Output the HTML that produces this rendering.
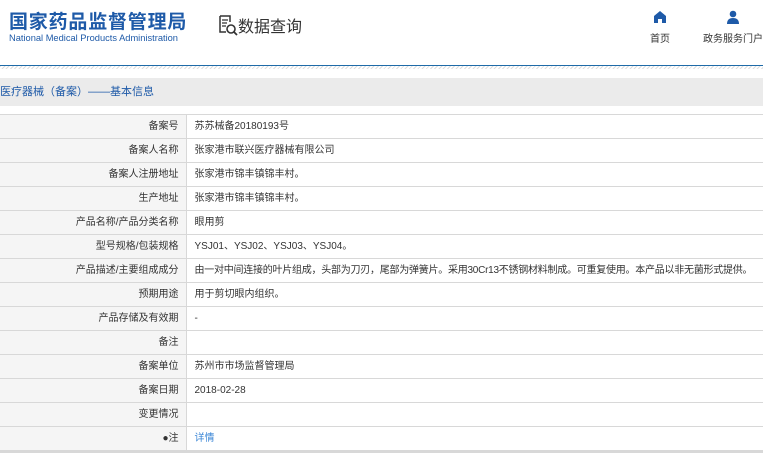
<!DOCTYPE html>
<html><head><meta charset="utf-8"><style>
body{margin:0;width:763px;height:456px;overflow:hidden;background:#fff;font-family:"Liberation Sans","Noto Sans CJK SC",sans-serif;color:#333}
.hd{position:relative;height:65px;border-bottom:1px solid #1f6ba8}
.logo1{position:absolute;left:9px;top:7px;font-size:19px;font-weight:bold;color:#1e5aa8;letter-spacing:0.8px}
.logo2{position:absolute;left:9px;top:33px;font-size:9.3px;color:#1e5aa8}
.dq{position:absolute;left:218px;top:13px;font-size:16px;color:#333}
.nav{position:absolute;top:10px;font-size:10px;color:#333;text-align:center}
.hatch{height:3px;background:repeating-linear-gradient(135deg,#ddd 0 1px,#fff 1px 3px)}
.bar{position:absolute;left:0;top:78px;width:763px;height:28px;background:#ebebeb;font-size:11px;color:#1e5aa8;line-height:28px}
table{position:absolute;left:0;top:114px;width:763px;border-collapse:collapse;font-size:10px}
td{height:23px;line-height:14px;vertical-align:middle;border-top:1px solid #d8d8d8;border-bottom:1px solid #d8d8d8;padding:0;white-space:nowrap}
td.l{width:186px;background:#f5f5f5;text-align:right;padding-right:7px;box-sizing:border-box;border-right:1px solid #d8d8d8}
td.v{padding-left:8px}
</style></head><body>
<div class="hd">
<div class="logo1">国家药品监督管理局</div>
<div class="logo2">National Medical Products Administration</div>
<div class="dq"><svg width="20" height="22" viewBox="0 0 20 22" style="vertical-align:-4px"><path d="M2 2h10v6M2 2v16h6" fill="none" stroke="#333" stroke-width="1.5"/><path d="M4 6h6M4 9h5M4 12h4" stroke="#333" stroke-width="1.2"/><circle cx="13" cy="15" r="4" fill="none" stroke="#333" stroke-width="1.6"/><path d="M16 18l3 3" stroke="#333" stroke-width="1.8"/></svg>数据查询</div>
<div class="nav" style="left:650px"><svg width="14" height="14" viewBox="0 0 14 14"><path d="M7 1L1 6v7h4V9h4v4h4V6z" fill="#1e5aa8"/></svg><div style="margin-top:3px">首页</div></div>
<div class="nav" style="left:703px"><svg width="14" height="14" viewBox="0 0 14 14"><circle cx="7" cy="4" r="3.3" fill="#1e5aa8"/><path d="M1 14c0-4 2-6 6-6s6 2 6 6z" fill="#1e5aa8"/></svg><div style="margin-top:3px">政务服务门户</div></div>
</div>
<div class="hatch"></div>
<div class="bar">医疗器械（备案）——基本信息</div>
<table>
<tr><td class="l">备案号</td><td class="v">苏苏械备20180193号</td></tr>
<tr><td class="l">备案人名称</td><td class="v">张家港市联兴医疗器械有限公司</td></tr>
<tr><td class="l">备案人注册地址</td><td class="v">张家港市锦丰镇锦丰村。</td></tr>
<tr><td class="l">生产地址</td><td class="v">张家港市锦丰镇锦丰村。</td></tr>
<tr><td class="l">产品名称/产品分类名称</td><td class="v">眼用剪</td></tr>
<tr><td class="l">型号规格/包装规格</td><td class="v">YSJ01、YSJ02、YSJ03、YSJ04。</td></tr>
<tr><td class="l">产品描述/主要组成成分</td><td class="v" style="letter-spacing:-0.25px">由一对中间连接的叶片组成，头部为刀刃，尾部为弹簧片。采用30Cr13不锈钢材料制成。可重复使用。本产品以非无菌形式提供。</td></tr>
<tr><td class="l">预期用途</td><td class="v">用于剪切眼内组织。</td></tr>
<tr><td class="l">产品存储及有效期</td><td class="v">-</td></tr>
<tr><td class="l">备注</td><td class="v"></td></tr>
<tr><td class="l">备案单位</td><td class="v">苏州市市场监督管理局</td></tr>
<tr><td class="l">备案日期</td><td class="v">2018-02-28</td></tr>
<tr><td class="l">变更情况</td><td class="v"></td></tr>
<tr><td class="l" style="border-bottom:3px solid #d8d8d8">●注</td><td class="v" style="color:#3a86d6;border-bottom:3px solid #d8d8d8">详情</td></tr>
</table>
</body></html>
